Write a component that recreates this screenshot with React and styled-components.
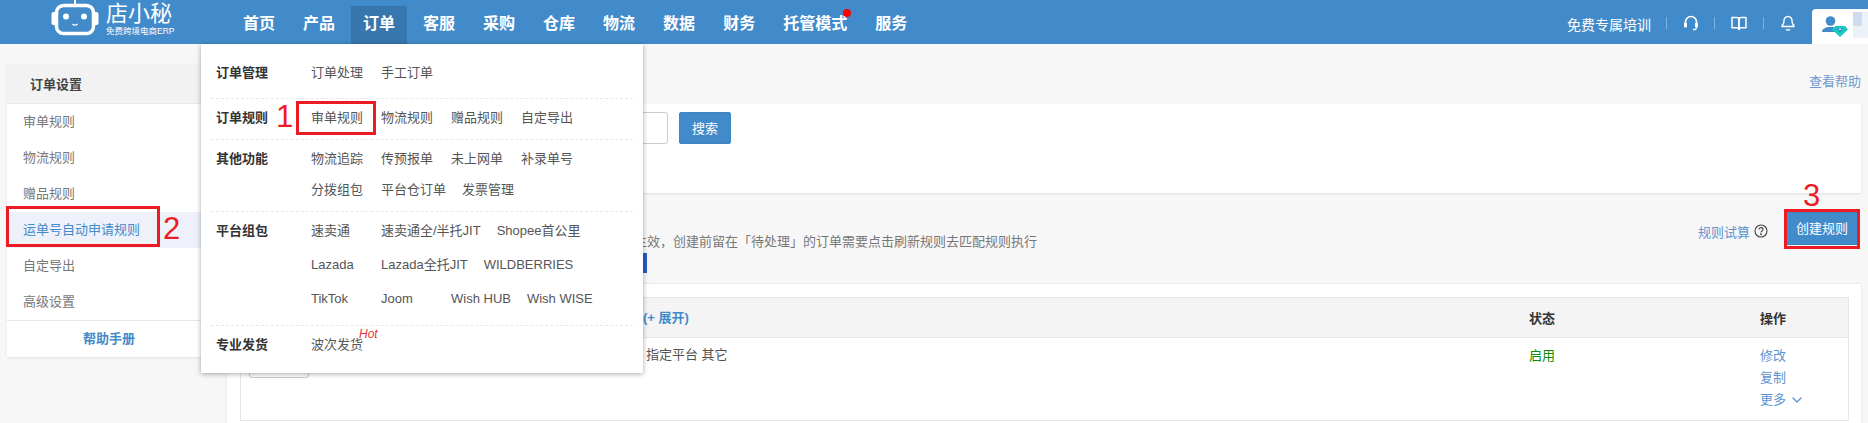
import styled, { createGlobalStyle } from "styled-components";
import { ChevronDown } from "lucide-react";

const Global = createGlobalStyle`
    html, body { margin: 0; padding: 0; height: 423px; overflow: hidden; }
    body {
        background: #f7f7f7;
        color: #555;
        font-family: "Liberation Sans", "Noto Sans CJK SC", sans-serif;
        font-size: 13px;
    }
    * { box-sizing: border-box; }
`;

const Page = styled.div`
    position: relative;
    width: 1868px;
    height: 423px;
    overflow: hidden;
`;

const Header = styled.header`
    height: 44px;
    background: #428bca;
    display: flex;
    align-items: flex-end;
    color: #fff;
`;

const Brand = styled.div`
    width: 231px;
    height: 44px;
    padding: 0 0 0 51px;
    display: flex;
    align-items: flex-start;
    gap: 7px;
`;

const BrandText = styled.div`
    display: flex;
    flex-direction: column;
    .name {
        font-size: 22px;
        line-height: 26px;
        margin-top: 1px;
    }
    .sub {
        font-size: 8.5px;
        line-height: 10px;
        margin-top: -1px;
        white-space: nowrap;
    }
`;

const Nav = styled.nav`
    display: flex;
    flex: 1;
    gap: 4px;
`;

const NavItem = styled.div`
    position: relative;
    height: 38px;
    padding: 0 12px;
    font-size: 16px;
    font-weight: bold;
    line-height: 36px;
    background: ${(p) => (p.$active ? "#3777ae" : "transparent")};
`;

const RedDot = styled.span`
    position: absolute;
    right: 8px;
    top: 3px;
    width: 8px;
    height: 8px;
    border-radius: 50%;
    background: #f00;
`;

const HeadRight = styled.div`
    display: flex;
    align-items: center;
    height: 44px;
`;

const Training = styled.span`
    font-size: 14px;
    margin-right: 15px;
    padding-top: 3px;
`;

const IconBox = styled.div`
    width: ${(p) => p.$w}px;
    height: 12px;
    display: flex;
    align-items: center;
    justify-content: center;
    border-left: 1px solid #7fb1dd;
    margin-top: 2px;
`;

const UserTab = styled.div`
    width: 56px;
    height: 35px;
    margin-top: 9px;
    background: #fff;
    border-top-left-radius: 4px;
    display: flex;
    padding-left: 10px;
    align-items: center;
    gap: 5px;
`;

const Blur = styled.div`
    width: 15px;
    height: 26px;
    margin-top: -4px;
    background:
        linear-gradient(#cfdcee, #cfdcee) 0 0 / 9px 14px no-repeat,
        #edf2f9;
`;

const Body = styled.div`
    display: flex;
    align-items: flex-start;
`;

const Sidebar = styled.aside`
    width: 204px;
    margin: 21px 0 0 7px;
    background: #fff;
    box-shadow: 0 1px 3px rgba(0, 0, 0, 0.08);
`;

const SideTitle = styled.div`
    height: 39px;
    padding-left: 23px;
    line-height: 39px;
    background: #f2f2f2;
    border-bottom: 1px solid #e8e8e8;
    font-weight: bold;
    color: #444;
`;

const SideList = styled.ul`
    list-style: none;
    margin: 0;
    padding: 0;
    border-bottom: 1px solid #e6e6e6;
`;

const SideItem = styled.li`
    height: 36px;
    padding-left: 16px;
    line-height: 36px;
    color: ${(p) => (p.$active ? "#428bca" : "#777")};
    background: ${(p) => (p.$active ? "#eef1fa" : "transparent")};
`;

const SideHelp = styled.div`
    height: 36px;
    line-height: 36px;
    text-align: center;
    font-weight: bold;
    color: #428bca;
`;

const Main = styled.main`
    flex: 1;
    margin: 0 7px 0 16px;
`;

const HelpRow = styled.div`
    height: 60px;
    display: flex;
    justify-content: flex-end;
    align-items: flex-end;
    padding-bottom: 14px;
    a { color: #6d9bd1; }
`;

const SearchPanel = styled.section`
    height: 89px;
    background: #fff;
    box-shadow: 0 1px 2px rgba(0, 0, 0, 0.1);
    display: flex;
    align-items: flex-start;
    padding: 8px 0 0 300px;
    gap: 11px;
`;

const SearchInput = styled.div`
    width: 141px;
    height: 32px;
    background: #fff;
    border: 1px solid #ccc;
    border-radius: 3px;
`;

const PrimaryButton = styled.button`
    height: ${(p) => p.$h || 32}px;
    width: ${(p) => p.$w}px;
    background: #428bca;
    color: #fff;
    border: 1px solid #3f85c2;
    border-radius: 2px;
    font: inherit;
    padding: 0 0 2px;
`;

const Toolbar = styled.section`
    position: relative;
    height: 91px;
    display: flex;
    align-items: flex-start;
    justify-content: flex-end;
    padding: 19px 1px 0 0;
`;

const Notice = styled.p`
    position: absolute;
    right: 824px;
    top: 40px;
    margin: 0;
    line-height: 18px;
    color: #777;
    white-space: nowrap;
`;

const Selected = styled.span`
    position: absolute;
    left: 400px;
    top: 60px;
    width: 20px;
    height: 20px;
    background: #2a5bc4;
`;

const TrialLink = styled.a`
    display: flex;
    align-items: center;
    gap: 4px;
    height: 38px;
    margin: 0 16px 0 0;
    color: #5f94d0;
`;

const TablePanel = styled.section`
    background: #fff;
    padding: 13px 12px 0 13px;
    box-shadow: 0 0 2px rgba(0, 0, 0, 0.12);
    height: 139px;
`;

const Table = styled.div`
    border: 1px solid #e6e6e6;
    border-bottom: 0;
`;

const Row = styled.div`
    display: grid;
    grid-template-columns: 1288px 231px 1fr;
    border-bottom: 1px solid #e6e6e6;
    height: ${(p) => p.$h}px;
    background: ${(p) => (p.$head ? "#f4f4f4" : "#fff")};
    font-weight: ${(p) => (p.$head ? "bold" : "normal")};
    color: ${(p) => (p.$head ? "#333" : "#555")};
    align-items: ${(p) => (p.$head ? "center" : "start")};
`;

const RuleCell = styled.div`
    position: relative;
    padding-left: ${(p) => p.$indent}px;
    padding-top: ${(p) => p.$top}px;
    line-height: 18px;
`;

const Expand = styled.span`
    color: #428bca;
    font-weight: bold;
`;

const Small = styled.span`
    position: absolute;
    left: 8px;
    top: 20px;
    width: 60px;
    height: 20px;
    border: 1px solid #ccc;
    border-radius: 3px;
`;

const Status = styled.div`
    padding-top: 9px;
    line-height: 18px;
    color: #0a8a0a;
`;

const Ops = styled.div`
    padding-top: 7px;
    color: #5f94d0;
    display: flex;
    flex-direction: column;
    line-height: 22px;
    span { display: flex; align-items: center; gap: 3px; }
`;

const Menu = styled.div`
    position: absolute;
    left: 201px;
    top: 44px;
    width: 442px;
    height: 329px;
    background: #fff;
    box-shadow: 0 1px 5px rgba(0, 0, 0, 0.35);
    padding: 0 10px;
`;

const MenuGroup = styled.div`
    display: flex;
    align-items: flex-start;
    border-bottom: ${(p) => (p.$last ? "0" : "1px dashed #e8e8e8")};
    padding: ${(p) => p.$pad};
`;

const GroupName = styled.div`
    width: 100px;
    padding-left: 5px;
    font-weight: bold;
    color: #333;
    line-height: 20px;
`;

const GroupItems = styled.div`
    display: flex;
    flex-direction: column;
    gap: ${(p) => p.$gap}px;
`;

const ItemRow = styled.div`
    display: flex;
    gap: 16px;
`;

const MenuLink = styled.span`
    position: relative;
    min-width: 54px;
    line-height: 20px;
    color: #555;
    white-space: nowrap;
`;

const Hot = styled.i`
    position: absolute;
    left: 48px;
    top: -11px;
    font-size: 12px;
    color: #ed2f3a;
`;

// red marks drawn on top of the screenshot
const MarkBox = styled.div`
    position: absolute;
    left: ${(p) => p.$x}px;
    top: ${(p) => p.$y}px;
    width: ${(p) => p.$w}px;
    height: ${(p) => p.$h}px;
    border: 3px solid #ed1c24;
`;

const MarkNum = styled.span`
    position: absolute;
    left: ${(p) => p.$x}px;
    top: ${(p) => p.$y}px;
    font-size: 31px;
    line-height: 36px;
    color: #ed1c24;
`;

const navItems = ["首页", "产品", "订单", "客服", "采购", "仓库", "物流", "数据", "财务", "托管模式", "服务"];
const sideItems = ["审单规则", "物流规则", "赠品规则", "运单号自动申请规则", "自定导出", "高级设置"];

const menuGroups = [
    { name: "订单管理", pad: "19px 0 15px", gap: 0, rows: [["订单处理", "手工订单"]] },
    { name: "订单规则", pad: "9px 0 11px", gap: 0, rows: [["审单规则", "物流规则", "赠品规则", "自定导出"]] },
    {
        name: "其他功能",
        pad: "9px 0 11px",
        gap: 11,
        rows: [
            ["物流追踪", "传预报单", "未上网单", "补录单号"],
            ["分拨组包", "平台仓订单", "发票管理"],
        ],
    },
    {
        name: "平台组包",
        pad: "9px 0 16px",
        gap: 14,
        rows: [
            ["速卖通", "速卖通全/半托JIT", "Shopee首公里"],
            ["Lazada", "Lazada全托JIT", "WILDBERRIES"],
            ["TikTok", "Joom", "Wish HUB", "Wish WISE"],
        ],
    },
];

function Logo() {
    return (
        <svg width="48" height="36" viewBox="0 0 48 36" fill="none">
            <path d="M24 0v4" stroke="#fff" strokeWidth="2" />
            <rect x="5.500" y="5.500" width="37" height="28" rx="7" stroke="#fff" strokeWidth="3.500" />
            <path d="M4 12H2.500A2 2 0 0 0 .5 14v9a2 2 0 0 0 2 2H4zM44 12h1.500a2 2 0 0 1 2 2v9a2 2 0 0 1-2 2H44z" fill="#fff" />
            <circle cx="15" cy="16.500" r="3" fill="#fff" />
            <circle cx="33" cy="16.500" r="3" fill="#fff" />
            <path d="M21.500 24c1.500 1.600 3.500 1.600 5 0" stroke="#fff" strokeWidth="1.200" />
        </svg>
    );
}

function HeadsetIcon() {
    return (
        <svg width="16" height="16" viewBox="0 0 16 16" fill="none">
            <path d="M2.500 9V7a5.500 5.500 0 0 1 11 0v2" stroke="#fff" strokeWidth="1.500" />
            <rect x="1" y="7.500" width="3" height="5" rx="1.200" fill="#fff" />
            <rect x="12" y="7.500" width="3" height="5" rx="1.200" fill="#fff" />
            <path d="M13.500 12.500c0 1.500-1.500 2.200-3.500 2.200" stroke="#fff" strokeWidth="1.300" />
        </svg>
    );
}

function BookIcon() {
    return (
        <svg width="16" height="15" viewBox="0 0 16 15" fill="none" stroke="#fff" strokeWidth="1.500" strokeLinejoin="round">
            <path d="M1 1.500h4.500c1.500 0 2.500.7 2.500 2v10c0-1-1-1.700-2.500-1.700H1z" />
            <path d="M15 1.500h-4.500c-1.500 0-2.500.7-2.500 2v10c0-1 1-1.700 2.500-1.700H15z" />
        </svg>
    );
}

function BellIcon() {
    return (
        <svg width="16" height="16" viewBox="0 0 16 16" fill="none" stroke="#fff" strokeWidth="1.400" strokeLinejoin="round">
            <path d="M8 1.500c-2.600 0-4 2-4 4.500 0 2.500-1 3.800-2 4.800v.7h12v-.7c-1-1-2-2.300-2-4.800 0-2.500-1.400-4.500-4-4.500z" />
            <path d="M6 14.300c1 1 3 1 4 0" />
        </svg>
    );
}

function UserIcon() {
    return (
        <svg width="26" height="21" viewBox="0 0 26 21" fill="none">
            <circle cx="8.500" cy="5" r="4.800" fill="#428bca" />
            <path d="M0 16c0-3 3-5 8.500-5 2.500 0 5 .5 6.500 1.500L13 16z" fill="#428bca" />
            <path d="M13.500 10h9.500l3 3.500-8 7.500-8-7.500z" fill="#19c7c0" />
            <path d="M15.500 12.500h5l-2.500 4z" fill="#1f6fd8" />
            <path d="M16.500 13l1.500 1.500L19.500 13l-1.500-.7z" fill="#e8ffff" />
        </svg>
    );
}

function HelpCircle() {
    return (
        <svg width="14" height="14" viewBox="0 0 14 14" fill="none" stroke="#444" strokeWidth="1.100">
            <circle cx="7" cy="7" r="6" />
            <path d="M5 5.500c0-2.500 4-2.500 4 0 0 1.500-2 1.500-2 3" />
            <circle cx="7" cy="10.300" r="0.400" />
        </svg>
    );
}

export default function App() {
    return (
        <Page>
            <Global />
            <Header>
                <Brand>
                    <Logo />
                    <BrandText>
                        <span className="name">店小秘</span>
                        <span className="sub">免费跨境电商ERP</span>
                    </BrandText>
                </Brand>
                <Nav>
                    {navItems.map((n) => (
                        <NavItem key={n} $active={n === "订单"}>
                            {n}
                            {n === "托管模式" && <RedDot />}
                        </NavItem>
                    ))}
                </Nav>
                <HeadRight>
                    <Training>免费专属培训</Training>
                    <IconBox $w={48}><HeadsetIcon /></IconBox>
                    <IconBox $w={49}><BookIcon /></IconBox>
                    <IconBox $w={49}><BellIcon /></IconBox>
                    <UserTab>
                        <UserIcon />
                        <Blur />
                    </UserTab>
                </HeadRight>
            </Header>

            <Body>
                <Sidebar>
                    <SideTitle>订单设置</SideTitle>
                    <SideList>
                        {sideItems.map((s) => (
                            <SideItem key={s} $active={s === "运单号自动申请规则"}>{s}</SideItem>
                        ))}
                    </SideList>
                    <SideHelp>帮助手册</SideHelp>
                </Sidebar>

                <Main>
                    <HelpRow><a>查看帮助</a></HelpRow>
                    <SearchPanel>
                        <SearchInput />
                        <PrimaryButton $w={52}>搜索</PrimaryButton>
                    </SearchPanel>
                    <Toolbar>
                        <Notice>生效，创建前留在「待处理」的订单需要点击刷新规则去匹配规则执行</Notice>
                        <Selected />
                        <TrialLink>规则试算<HelpCircle /></TrialLink>
                        <PrimaryButton $w={76} $h={33}>创建规则</PrimaryButton>
                    </Toolbar>
                    <TablePanel>
                        <Table>
                            <Row $head $h={40}>
                                <RuleCell $indent={402} $top={0}><Expand>(+ 展开)</Expand></RuleCell>
                                <div>状态</div>
                                <div>操作</div>
                            </Row>
                            <Row $h={83}>
                                <RuleCell $indent={405} $top={8}>
                                    <Small />
                                    指定平台 其它
                                </RuleCell>
                                <Status>启用</Status>
                                <Ops>
                                    <span>修改</span>
                                    <span>复制</span>
                                    <span>更多 <ChevronDown size={16} strokeWidth={2} /></span>
                                </Ops>
                            </Row>
                        </Table>
                    </TablePanel>
                </Main>
            </Body>

            <Menu>
                {menuGroups.map((g) => (
                    <MenuGroup key={g.name} $pad={g.pad}>
                        <GroupName>{g.name}</GroupName>
                        <GroupItems $gap={g.gap}>
                            {g.rows.map((r, i) => (
                                <ItemRow key={i}>
                                    {r.map((t) => <MenuLink key={t}>{t}</MenuLink>)}
                                </ItemRow>
                            ))}
                        </GroupItems>
                    </MenuGroup>
                ))}
                <MenuGroup $last $pad="9px 0">
                    <GroupName>专业发货</GroupName>
                    <GroupItems $gap={0}>
                        <ItemRow>
                            <MenuLink>波次发货<Hot>Hot</Hot></MenuLink>
                        </ItemRow>
                    </GroupItems>
                </MenuGroup>
            </Menu>

            <MarkBox $x={296} $y={101} $w={80} $h={34} />
            <MarkNum $x={276} $y={99}>1</MarkNum>
            <MarkBox $x={6} $y={206} $w={154} $h={41} />
            <MarkNum $x={163} $y={211}>2</MarkNum>
            <MarkBox $x={1784} $y={209} $w={76} $h={40} />
            <MarkNum $x={1803} $y={178}>3</MarkNum>
        </Page>
    );
}
